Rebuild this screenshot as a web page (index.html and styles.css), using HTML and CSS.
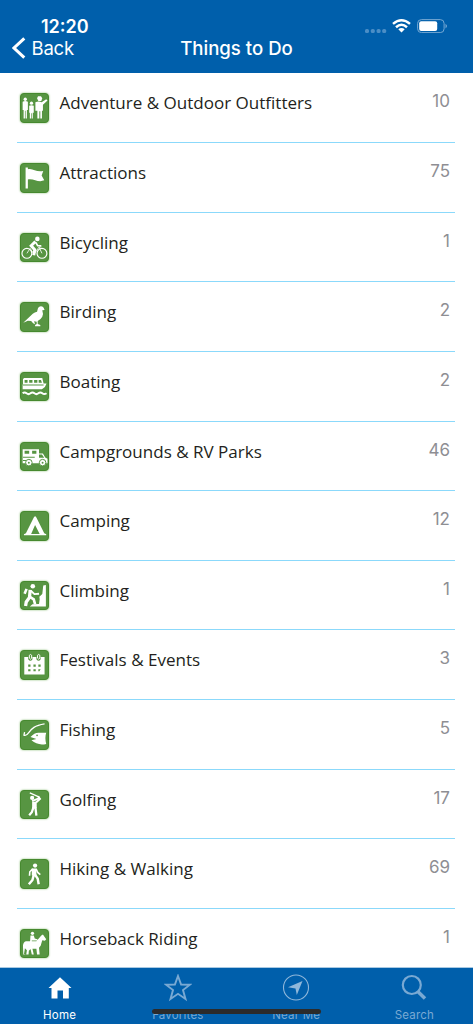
FILE: index.html
```html
<!DOCTYPE html>
<html lang="en">
<head>
<meta charset="utf-8">
<title>Things to Do</title>
<link rel="stylesheet" href="styles.css">
</head>
<body>
<div class="screen">
  <header class="header">
    <div class="status">
      <span class="time">12:20</span>
      <div class="indicators">
        <svg class="signal" width="22" height="4" viewBox="0 0 22 4"><g fill="#4b8ec6"><rect width="4" height="4" rx="1.6"/><rect x="5.8" width="4" height="4" rx="1.6"/><rect x="11.6" width="4" height="4" rx="1.6"/><rect x="17.2" width="4" height="4" rx="1.6"/></g></svg>
        <svg class="wifi" width="19" height="14" viewBox="0 0 19 14"><g fill="none" stroke="#fff" stroke-width="2.5"><path d="M1 4.9Q9.500-2.300 18 4.900"/><path d="M4 8.200Q9.500 3.300 15 8.200"/></g><path d="M6.300 10.300Q9.500 7.800 12.700 10.300L9.500 13.600Z" fill="#fff"/></svg>
        <svg class="battery" width="31" height="14" viewBox="0 0 31 14"><rect x=".6" y=".6" width="26.500" height="13" rx="3.800" fill="none" stroke="#75a8d3"/><rect x="2.200" y="2.200" width="18" height="9.800" rx="2" fill="#fff"/><path d="M28.500 4.800q3 2.300 0 4.600z" fill="#75a8d3"/></svg>
      </div>
    </div>
    <div class="nav">
      <a class="back"><svg width="14" height="22" viewBox="0 0 14 22"><path d="M12.300 1.300L2 11L12.300 20.700" fill="none" stroke="#fff" stroke-width="3"/></svg><span>Back</span></a>
      <h1 class="title">Things to Do</h1>
    </div>
  </header>
  <main class="list">
    <div class="row"><svg class="icon" viewBox="3 3 84 84"><g fill="#fff"><circle cx="16" cy="19" r="5"/><path d="M8 27q8-5 16 0v25h-3v26h-4V54h-2v24h-4V52H8z"/><circle cx="35" cy="31" r="5"/><path d="M28 39q7-4 14 0v21h-3v18h-3V62h-2v16h-4V60h-2z"/><path d="M52 16l3-6h9l4 6-3 8h-9zM47 28q10-4 19 0l14-9 4 4-14 13v18h-3v24h-5V56h-3v22h-6V54h-6z"/></g></svg><span class="name">Adventure &amp; Outdoor Outfitters</span><span class="count">10</span></div>
    <div class="row"><svg class="icon" viewBox="3 3 84 84"><path d="M17 14h7v5c15-5 26 11 47 5l-5 14 8 15C55 61 42 46 24 50v28h-7z" fill="#fff"/></svg><span class="name">Attractions</span><span class="count">75</span></div>
    <div class="row"><svg class="icon" viewBox="3 3 84 84"><g fill="none" stroke="#fff"><circle cx="21" cy="62" r="15" stroke-width="3.500"/><circle cx="67" cy="62" r="15" stroke-width="3.500"/><path d="M47 26L34 39L45 51L42 68" stroke-width="9"/><path d="M48 29L54 39H65" stroke-width="5"/><path d="M21 62L31 47L43 65L58 43L67 62M58 43L65 42" stroke-width="2.500"/></g><circle cx="53" cy="18" r="7" fill="#fff"/></svg><span class="name">Bicycling</span><span class="count">1</span></div>
    <div class="row"><svg class="icon" viewBox="3 3 84 84"><path d="M10 63L39 36Q45 31 52 30L55 18Q60 11 68 14Q73 16 75 24L68 25Q72 35 68 45Q63 54 54 58V67L62 70V74H46V70L51 67V60L43 59L46 68L40 65L34 58L24 57Z" fill="#fff"/></svg><span class="name">Birding</span><span class="count">2</span></div>
    <div class="row"><svg class="icon" viewBox="3 3 84 84"><path d="M9 21L13 18H68L72 35H81L76 46L67 53H8V38H9Z" fill="#fff"/><g fill="#579542"><path d="M14 24h9v9h-9zM28 24h10v9H28zM43 24h10v9H43zM57 24h7l3 9H57zM9 38h63v3H9z"/></g><path d="M8 65q6-5 12 0t12 0 12 0 12 0 12 0 13 0" fill="none" stroke="#fff" stroke-width="6"/></svg><span class="name">Boating</span><span class="count">2</span></div>
    <div class="row"><svg class="icon" viewBox="3 3 84 84"><path d="M8 22H58V35H70L77 47L84 51V65H8Z" fill="#fff"/><path d="M14 27h14v9H14zM37 27h13v9H37zM58 38h9l7 10H58zM9 45h36v3H9zM9 55h11v3H9z" fill="#579542"/><g fill="#fff" stroke="#579542" stroke-width="3"><circle cx="27" cy="63" r="10"/><circle cx="69" cy="63" r="10"/></g><g fill="#579542"><circle cx="27" cy="63" r="3"/><circle cx="69" cy="63" r="3"/></g></svg><span class="name">Campgrounds &amp; RV Parks</span><span class="count">46</span></div>
    <div class="row"><svg class="icon" viewBox="3 3 84 84"><path d="M46 15L50 20L74 68L80 71V74H12V71L18 68L42 20ZM46 43L34 70H60Z" fill="#fff" fill-rule="evenodd"/></svg><span class="name">Camping</span><span class="count">12</span></div>
    <div class="row"><svg class="icon" viewBox="3 3 84 84"><path d="M71 14l8-2v66H30l8-7 20-1 2-14-1-8 9-8z" fill="#fff"/><g fill="none" stroke="#fff"><path d="M31 27L29 50L19 64L17 76" stroke-width="10"/><path d="M29 48L42 56L46 71" stroke-width="8"/><path d="M33 30L44 40L58 39" stroke-width="6"/><path d="M20 24L14 39" stroke-width="8"/></g><circle cx="39" cy="16" r="7" fill="#fff"/></svg><span class="name">Climbing</span><span class="count">1</span></div>
    <div class="row"><svg class="icon" viewBox="3 3 84 84"><path d="M13 21H25V28Q32 38 38 28V21H50V28Q57 38 63 28V21H75V75H13Z" fill="#fff"/><path d="M28.500 25V16q3.500-5 7 0v9q-3.500 6-7 0M53.500 25V16q3.500-5 7 0v9q-3.500 6-7 0" fill="none" stroke="#fff" stroke-width="3"/><path d="M25 44h7v7h-7zm16 0h7v7h-7zm15 0h7v7h-7zM25 59h7v6h-7zm16 0h7v6h-7zm15 0h7l-4 6h-3z" fill="#579542"/></svg><span class="name">Festivals &amp; Events</span><span class="count">3</span></div>
    <div class="row"><svg class="icon" viewBox="3 3 84 84"><path d="M14 37L12 46Q19 49 26 39C36 26 44 17 75 12" fill="none" stroke="#fff" stroke-width="4"/><path d="M32 52Q45 37 60 39H80Q75 54 80 73Q54 79 35 62L50 58Z" fill="#fff"/><circle cx="52" cy="47" r="2.500" fill="#579542"/></svg><span class="name">Fishing</span><span class="count">5</span></div>
    <div class="row"><svg class="icon" viewBox="3 3 84 84"><circle cx="37" cy="24" r="6.500" fill="#fff"/><g fill="none" stroke="#fff"><path d="M30 9L59 22" stroke-width="4"/><path d="M55 19L61 27L49 38" stroke-width="6"/><path d="M37 34L59 25" stroke-width="6"/><path d="M44 36L44 56" stroke-width="14"/><path d="M41 53L36 68L28 77M47 53L50 78" stroke-width="7"/></g></svg><span class="name">Golfing</span><span class="count">17</span></div>
    <div class="row"><svg class="icon" viewBox="3 3 84 84"><circle cx="46" cy="20" r="6.500" fill="#fff"/><g fill="none" stroke="#fff"><path d="M43 29V50" stroke-width="14"/><path d="M39 30L30 39L29 51M49 30L54 41L62 48" stroke-width="5"/><path d="M42 48L38 64L27 77M46 48L54 60L57 77" stroke-width="7.500"/></g></svg><span class="name">Hiking &amp; Walking</span><span class="count">69</span></div>
    <div class="row"><svg class="icon" viewBox="3 3 84 84"><circle cx="38" cy="13" r="5" fill="#fff"/><path d="M32 20h10l3 9 8 2v4H36V48H30zM18 37H50L65 20L70 17L80 31L76 36L68 34L63 51L58 57L60 78H52L50 60H33L27 66L26 78H19L21 65L15 59L12 78H18L12 79 10 76 9 51Q10 39 18 37ZM32 60h6l4 18h-6z" fill="#fff"/></svg><span class="name">Horseback Riding</span><span class="count">1</span></div>
  </main>
  <footer class="tabs">
    <a class="tab active"><svg width="28" height="28" viewBox="0 0 28 28"><path d="M14 3.200L25.500 14H22.800V24.600H17V16.600H11.500V24.600H5.500V14H2.500Z" fill="#fff"/></svg><span>Home</span></a>
    <a class="tab"><svg width="28" height="28" viewBox="0 0 28 28"><path d="M14 2L17.100 10.500L26 10.700L19 16.100L21.500 25L14 19.800L6.500 25L9 16.100L2 10.700L10.900 10.500Z" fill="none" stroke="#79a9d3" stroke-width="1.900"/></svg><span>Favorites</span></a>
    <a class="tab"><svg width="28" height="28" viewBox="0 0 28 28"><circle cx="14" cy="13.500" r="12.500" fill="none" stroke="#8fb7da" stroke-width="1.100"/><path d="M20.500 7L14.800 21L13.500 14.500L6 13.300Z" fill="#8fb7da"/></svg><span>Near Me</span></a>
    <a class="tab"><svg width="28" height="28" viewBox="0 0 28 28"><g fill="none" stroke="#79a9d3"><circle cx="11.800" cy="11" r="9" stroke-width="2.200"/><path d="M17.800 17.500L25 24.500" stroke-width="3.500"/></g></svg><span>Search</span></a>
    <div class="home-indicator"></div>
  </footer>
</div>
</body>
</html>
```

FILE: styles.css
```css
* { box-sizing: border-box; }
body { margin: 0; background: #fff; font-family: Inter, "Liberation Sans", sans-serif; }
.screen { width: 473px; height: 1024px; display: flex; flex-direction: column; overflow: hidden; }
.header { flex: none; height: 73px; padding-top: 16px; background: #005fab; color: #fff; }
.status { height: 20px; display: flex; justify-content: space-between; padding: 0 25px 0 41px; }
.time { font-size: 18px; line-height: 21px; font-weight: 600; }
.indicators { display: flex; align-items: flex-start; padding-top: 3px; }
.signal { margin-top: 10px; }
.wifi { margin: 0 6px 0 5px; }
.nav { display: grid; grid-template-columns: 1fr auto 1fr; align-items: center; height: 24px; }
.back { display: flex; align-items: center; gap: 6px; padding-left: 11.5px; font-size: 18.5px; line-height: 24px; letter-spacing: -0.2px; }
.title { margin: 0; font-size: 18.6px; line-height: 24px; font-weight: 500; letter-spacing: 0; }
.list { flex: 1; min-height: 0; overflow: hidden; padding: 0.4px 18px 0 17px; }
.row { height: 69.64px; display: flex; align-items: flex-start; border-bottom: 1px solid #8bd9fb; padding: 20px 5px 0 2.5px; }
.icon { flex: none; width: 29.5px; height: 29.5px; border-radius: 4px; background: #579542; border: 1px solid #46892f; box-shadow: 0 0 2px #78b361; }
.name { flex: 1; margin: -2px 0 0 10.5px; font-family: "Open Sans", "Noto Sans", sans-serif; font-size: 17.05px; line-height: 24px; color: #231f20; }
.count { margin-top: -3px; font-size: 17px; line-height: 22px; color: #8e8e93; }
.tabs { position: relative; flex: none; height: 57px; display: grid; grid-template-columns: repeat(4, 1fr); background: #005fab; border-top: 1px solid #a9c9e2; }
.tab { display: flex; flex-direction: column; align-items: center; padding: 6px 0 0 1px; color: #79a9d3; font-size: 11.5px; line-height: 14px; letter-spacing: 0.2px; }
.tab span { margin-top: 6px; }
.tab.active { color: #fff; }
.home-indicator { position: absolute; left: 152px; bottom: 10px; width: 169px; height: 5px; border-radius: 3px; background: #2b2b2b; }
```
